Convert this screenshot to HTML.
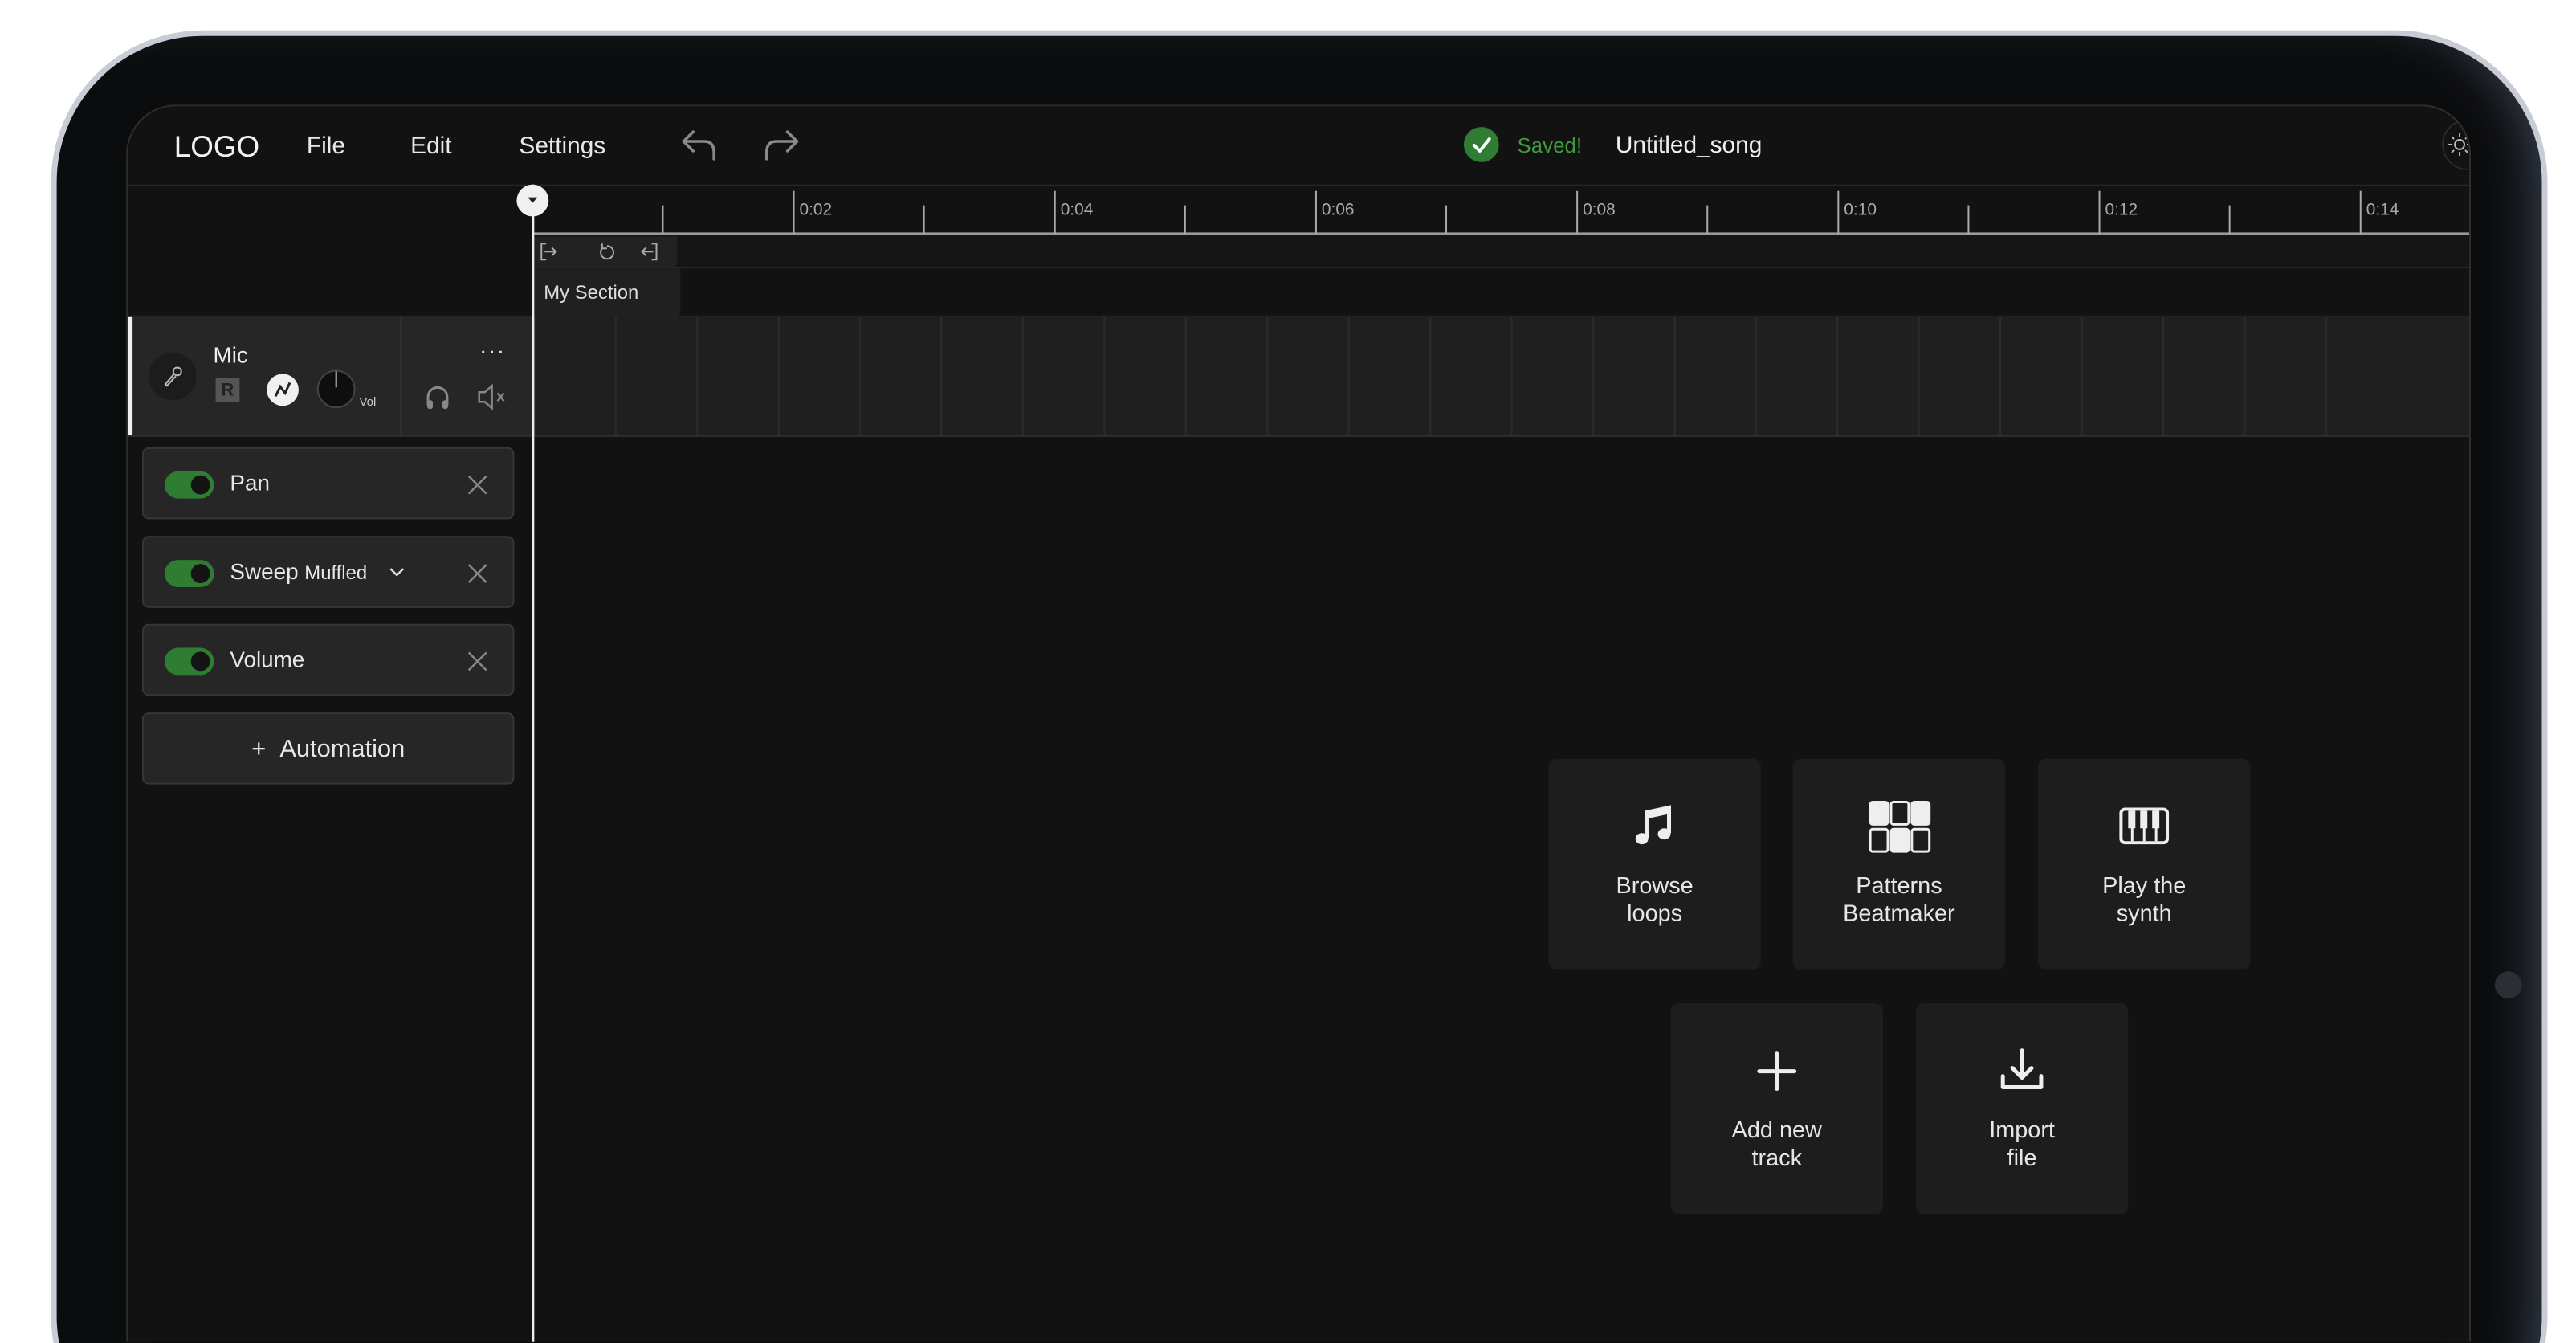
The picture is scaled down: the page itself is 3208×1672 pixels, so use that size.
<!DOCTYPE html>
<html style="width:3208px;height:1672px;overflow:hidden"><head><meta charset="utf-8">
<style>
*{margin:0;padding:0;box-sizing:border-box}
html,body{width:3208px;height:1672px;overflow:hidden}
body{background:#fff;position:relative;font-family:"Liberation Sans",sans-serif;color:#e8e8e8}
.a{position:absolute}
.clip{position:absolute;left:0;top:0;width:3208px;height:1672px;overflow:hidden}
.wrap{position:absolute;left:0;top:0;width:3208px;height:1680px;transform:scale(0.9945);transform-origin:0 0}
.bezel{left:64px;top:38px;width:3126px;height:1800px;border-radius:190px;background:#0b0c0e;border:7px solid #c8cdd5;box-shadow:inset -40px 0 60px -30px #3a4250}
.screen{left:158px;top:131px;width:2936px;height:1549px;border-radius:62px 62px 0 0;background:#121212;border:2px solid #2e2e2e;border-bottom:none;overflow:hidden}
.t{position:absolute;white-space:nowrap}
.auto{left:176px;width:466px;height:90px;background:#262626;border:2px solid #363636;border-radius:8px}
.tog{position:absolute;left:26px;top:28px;width:62px;height:34px;border-radius:17px;background:#2f7d32}
.tog:after{content:"";position:absolute;right:5px;top:5px;width:24px;height:24px;border-radius:50%;background:#141414}
.card{width:266px;height:264px;background:#1d1d1d;border-radius:10px}
.card .t{width:100%;text-align:center;font-size:29px;line-height:35px;top:142px;color:#e6e6e6}
.card svg{position:absolute;left:101px;top:53px}
</style></head><body>
<div class="clip"><div class="wrap">
<div class="a bezel"></div>
<div class="a" style="left:3124px;top:1216px;width:34px;height:34px;border-radius:50%;background:#2a2e35"></div>
<div class="a screen">
 <div class="t" style="left:58px;top:30px;font-size:37px;color:#f2f2f2">LOGO</div>
 <div class="t" style="left:224px;top:33px;font-size:30px">File</div>
 <div class="t" style="left:354px;top:33px;font-size:30px">Edit</div>
 <div class="t" style="left:490px;top:33px;font-size:30px">Settings</div>
 <svg class="a" style="left:690px;top:26px" width="60" height="44" viewBox="0 0 60 44"><path d="M18 6 L6 18 L18 30 M6 18 H32 Q44 18 44 32 V40" fill="none" stroke="#8a8a8a" stroke-width="3.5" stroke-linecap="round" stroke-linejoin="round"/></svg>
 <svg class="a" style="left:784px;top:26px" width="60" height="44" viewBox="0 0 60 44"><path d="M42 6 L54 18 L42 30 M54 18 H28 Q16 18 16 32 V40" fill="none" stroke="#8a8a8a" stroke-width="3.5" stroke-linecap="round" stroke-linejoin="round"/></svg>
 <div class="a" style="left:1673px;top:26px;width:44px;height:44px;border-radius:50%;background:#2e7d32"></div>
 <svg class="a" style="left:1673px;top:26px" width="44" height="44"><path d="M13 23 L20 30 L32 15" fill="none" stroke="#fff" stroke-width="4" stroke-linecap="round" stroke-linejoin="round"/></svg>
 <div class="t" style="left:1740px;top:34px;font-size:26px;color:#3f9a3f">Saved!</div>
 <div class="t" style="left:1863px;top:32px;font-size:30px;color:#f0f0f0">Untitled_song</div>
 <div class="a" style="left:2898px;top:16px;width:64px;height:64px;border-radius:50%;border:2px solid #2a2a2a"></div>
 <svg class="a" style="left:2904px;top:32px" width="32" height="32" viewBox="0 0 32 32"><circle cx="16" cy="16" r="6" fill="none" stroke="#bbb" stroke-width="2"/><path d="M16 2v5M16 25v5M2 16h5M25 16h5M6 6l3 3M23 23l3 3M6 26l3-3M23 9l3-3" stroke="#bbb" stroke-width="2"/></svg>
 <div class="a" style="left:0;top:98px;width:2936px;height:2px;background:#262626"></div>
 <div class="a" style="left:508px;top:158px;width:2428px;height:3px;background:#9a9a9a"></div>
 <div class="a" style="left:669px;top:124px;width:2px;height:36px;background:#aaa"></div>
 <div class="a" style="left:833px;top:106px;width:2px;height:54px;background:#aaa"></div><div class="t" style="left:841px;top:118px;font-size:21px;color:#aaa">0:02</div>
 <div class="a" style="left:996px;top:124px;width:2px;height:36px;background:#aaa"></div>
 <div class="a" style="left:1160px;top:106px;width:2px;height:54px;background:#aaa"></div><div class="t" style="left:1168px;top:118px;font-size:21px;color:#aaa">0:04</div>
 <div class="a" style="left:1323px;top:124px;width:2px;height:36px;background:#aaa"></div>
 <div class="a" style="left:1487px;top:106px;width:2px;height:54px;background:#aaa"></div><div class="t" style="left:1495px;top:118px;font-size:21px;color:#aaa">0:06</div>
 <div class="a" style="left:1650px;top:124px;width:2px;height:36px;background:#aaa"></div>
 <div class="a" style="left:1814px;top:106px;width:2px;height:54px;background:#aaa"></div><div class="t" style="left:1822px;top:118px;font-size:21px;color:#aaa">0:08</div>
 <div class="a" style="left:1977px;top:124px;width:2px;height:36px;background:#aaa"></div>
 <div class="a" style="left:2141px;top:106px;width:2px;height:54px;background:#aaa"></div><div class="t" style="left:2149px;top:118px;font-size:21px;color:#aaa">0:10</div>
 <div class="a" style="left:2304px;top:124px;width:2px;height:36px;background:#aaa"></div>
 <div class="a" style="left:2468px;top:106px;width:2px;height:54px;background:#aaa"></div><div class="t" style="left:2476px;top:118px;font-size:21px;color:#aaa">0:12</div>
 <div class="a" style="left:2631px;top:124px;width:2px;height:36px;background:#aaa"></div>
 <div class="a" style="left:2795px;top:106px;width:2px;height:54px;background:#aaa"></div><div class="t" style="left:2803px;top:118px;font-size:21px;color:#aaa">0:14</div>
 <div class="a" style="left:508px;top:161px;width:2428px;height:42px;background:#151515;border-bottom:2px solid #262626"></div>
 <div class="a" style="left:508px;top:163px;width:180px;height:38px;background:#222;border-radius:0 0 6px 0"></div>
 <svg class="a" style="left:510px;top:166px" width="180" height="32" viewBox="0 0 180 32"><path d="M14 6h-6v20h6M12 16h14M21 11l5 5-5 5" fill="none" stroke="#aaa" stroke-width="2"/><path d="M90 9a8 8 0 1 1-6 3M84 6v6h6" fill="none" stroke="#aaa" stroke-width="2"/><path d="M146 6h6v20h-6M148 16h-14M139 11l-5 5 5 5" fill="none" stroke="#aaa" stroke-width="2"/></svg>
 <div class="a" style="left:508px;top:203px;width:184px;height:60px;background:#202020;border-radius:0 0 6px 0"></div>
 <div class="t" style="left:521px;top:220px;font-size:24px;color:#ddd">My Section</div>
 <div class="a" style="left:0;top:262px;width:2936px;height:2px;background:#262626"></div>
 <div class="a" style="left:0;top:264px;width:508px;height:148px;background:#262626"></div>
 <div class="a" style="left:0;top:264px;width:6px;height:148px;background:#f0f0f0"></div>
 <div class="a" style="left:341px;top:264px;width:2px;height:148px;background:#333"></div>
 <div class="a" style="left:508px;top:264px;width:2428px;height:148px;background:repeating-linear-gradient(90deg,#1f1f1f 0 100px,#2b2b2b 100px 102px);background-position:-100px 0"></div>
 <div class="a" style="left:0;top:412px;width:2936px;height:2px;background:#2c2c2c"></div>
 <div class="a" style="left:26px;top:308px;width:60px;height:60px;border-radius:50%;background:#1c1c1c"></div>
 <svg class="a" style="left:40px;top:322px" width="32" height="32" viewBox="0 0 32 32"><circle cx="22" cy="10" r="5" fill="none" stroke="#bbb" stroke-width="2"/><path d="M18 13 L7 26 L9 28 L20 16" fill="none" stroke="#bbb" stroke-width="2"/></svg>
 <div class="t" style="left:107px;top:296px;font-size:28px;color:#eee">Mic</div>
 <div class="a" style="left:110px;top:340px;width:30px;height:30px;background:#555;color:#222;font-size:22px;font-weight:bold;text-align:center;line-height:30px">R</div>
 <div class="a" style="left:174px;top:335px;width:40px;height:40px;border-radius:50%;background:#f0f0f0"></div>
 <svg class="a" style="left:174px;top:335px" width="40" height="40"><path d="M11 28 L17 16 L23 24 L29 11" fill="none" stroke="#222" stroke-width="3"/></svg>
 <div class="a" style="left:237px;top:330px;width:48px;height:48px;border-radius:50%;background:#0e0e0e;border:2px solid #444"></div>
 <div class="a" style="left:260px;top:332px;width:2px;height:20px;background:#ccc"></div>
 <div class="t" style="left:290px;top:362px;font-size:15px;color:#ccc">Vol</div>
 <div class="t" style="left:440px;top:290px;font-size:30px;color:#ddd;letter-spacing:1px">···</div>
 <svg class="a" style="left:370px;top:346px" width="36" height="36" viewBox="0 0 36 36"><path d="M6 28V18a12 12 0 0 1 24 0v10" fill="none" stroke="#888" stroke-width="3"/><rect x="5" y="22" width="7" height="11" rx="3" fill="#888"/><rect x="24" y="22" width="7" height="11" rx="3" fill="#888"/></svg>
 <svg class="a" style="left:436px;top:346px" width="44" height="36" viewBox="0 0 44 36"><path d="M4 12h7l9-8v28l-9-8H4z" fill="none" stroke="#888" stroke-width="2.5"/><path d="M27 13l8 10M35 13l-8 10" stroke="#888" stroke-width="2.5"/></svg>
 <div class="a auto" style="left:18px;top:427px"><div class="tog"></div><div class="t" style="left:108px;top:27px;font-size:28px">Pan</div><svg class="a" style="left:404px;top:31px" width="28" height="28"><path d="M3 3L25 25M25 3L3 25" stroke="#888" stroke-width="2.5"/></svg></div>
 <div class="a auto" style="left:18px;top:538px"><div class="tog"></div><div class="t" style="left:108px;top:27px;font-size:28px">Sweep <span style="font-size:24px">Muffled</span></div><svg class="a" style="left:306px;top:36px" width="22" height="16"><path d="M3 3l8 8 8-8" fill="none" stroke="#ddd" stroke-width="2.5"/></svg><svg class="a" style="left:404px;top:31px" width="28" height="28"><path d="M3 3L25 25M25 3L3 25" stroke="#888" stroke-width="2.5"/></svg></div>
 <div class="a auto" style="left:18px;top:648px"><div class="tog"></div><div class="t" style="left:108px;top:27px;font-size:28px">Volume</div><svg class="a" style="left:404px;top:31px" width="28" height="28"><path d="M3 3L25 25M25 3L3 25" stroke="#888" stroke-width="2.5"/></svg></div>
 <div class="a auto" style="left:18px;top:759px"><div class="t" style="left:0;width:100%;text-align:center;top:25px;font-size:31px">+&nbsp;&nbsp;Automation</div></div>
 <div class="a" style="left:506px;top:98px;width:3px;height:1460px;background:#eee"></div>
 <div class="a" style="left:487px;top:98px;width:40px;height:40px;border-radius:50%;background:#f0f0f0"></div>
 <svg class="a" style="left:487px;top:98px" width="40" height="40"><path d="M14 16h12l-6 7z" fill="#222"/></svg>
 <div class="a card" style="left:1779px;top:817px"><svg width="64" height="64" viewBox="0 0 64 64"><path d="M22 46V14l28-6v32" fill="none" stroke="#eee" stroke-width="5"/><ellipse cx="16" cy="47" rx="8" ry="7" fill="#eee"/><ellipse cx="44" cy="41" rx="8" ry="7" fill="#eee"/><path d="M22 14l28-6v8l-28 6z" fill="#eee"/></svg><div class="t">Browse<br>loops</div></div>
 <div class="a card" style="left:2085px;top:817px"><svg viewBox="0 0 78 66" style="left:95px;width:78px;height:66px;top:52px"><g stroke="#eee" stroke-width="3" fill="#eee"><rect x="2" y="2" width="22" height="28" rx="3"/><rect x="28" y="2" width="22" height="28" rx="3" fill="none"/><rect x="54" y="2" width="22" height="28" rx="3"/><rect x="2" y="36" width="22" height="28" rx="3" fill="none"/><rect x="28" y="36" width="22" height="28" rx="3"/><rect x="54" y="36" width="22" height="28" rx="3" fill="none"/></g></svg><div class="t">Patterns<br>Beatmaker</div></div>
 <div class="a card" style="left:2392px;top:817px"><svg width="64" height="64" viewBox="0 0 64 64"><rect x="3" y="10" width="58" height="42" rx="5" fill="none" stroke="#eee" stroke-width="4"/><path d="M17 12v38M32 12v38M47 12v38" stroke="#eee" stroke-width="3"/><path d="M12 12h9v22h-9zM27 12h9v22h-9zM42 12h9v22h-9z" fill="#eee"/></svg><div class="t">Play the<br>synth</div></div>
 <div class="a card" style="left:1932px;top:1123px"><svg width="64" height="64" viewBox="0 0 64 64"><path d="M32 10v44M10 32h44" stroke="#eee" stroke-width="5" stroke-linecap="round"/></svg><div class="t">Add new<br>track</div></div>
 <div class="a card" style="left:2239px;top:1123px"><svg width="64" height="64" viewBox="0 0 64 64"><path d="M32 6v34M20 28l12 12 12-12M8 38v14h48V38" fill="none" stroke="#eee" stroke-width="5" stroke-linecap="round" stroke-linejoin="round"/></svg><div class="t">Import<br>file</div></div>
</div>
</div></div>
</body></html>
